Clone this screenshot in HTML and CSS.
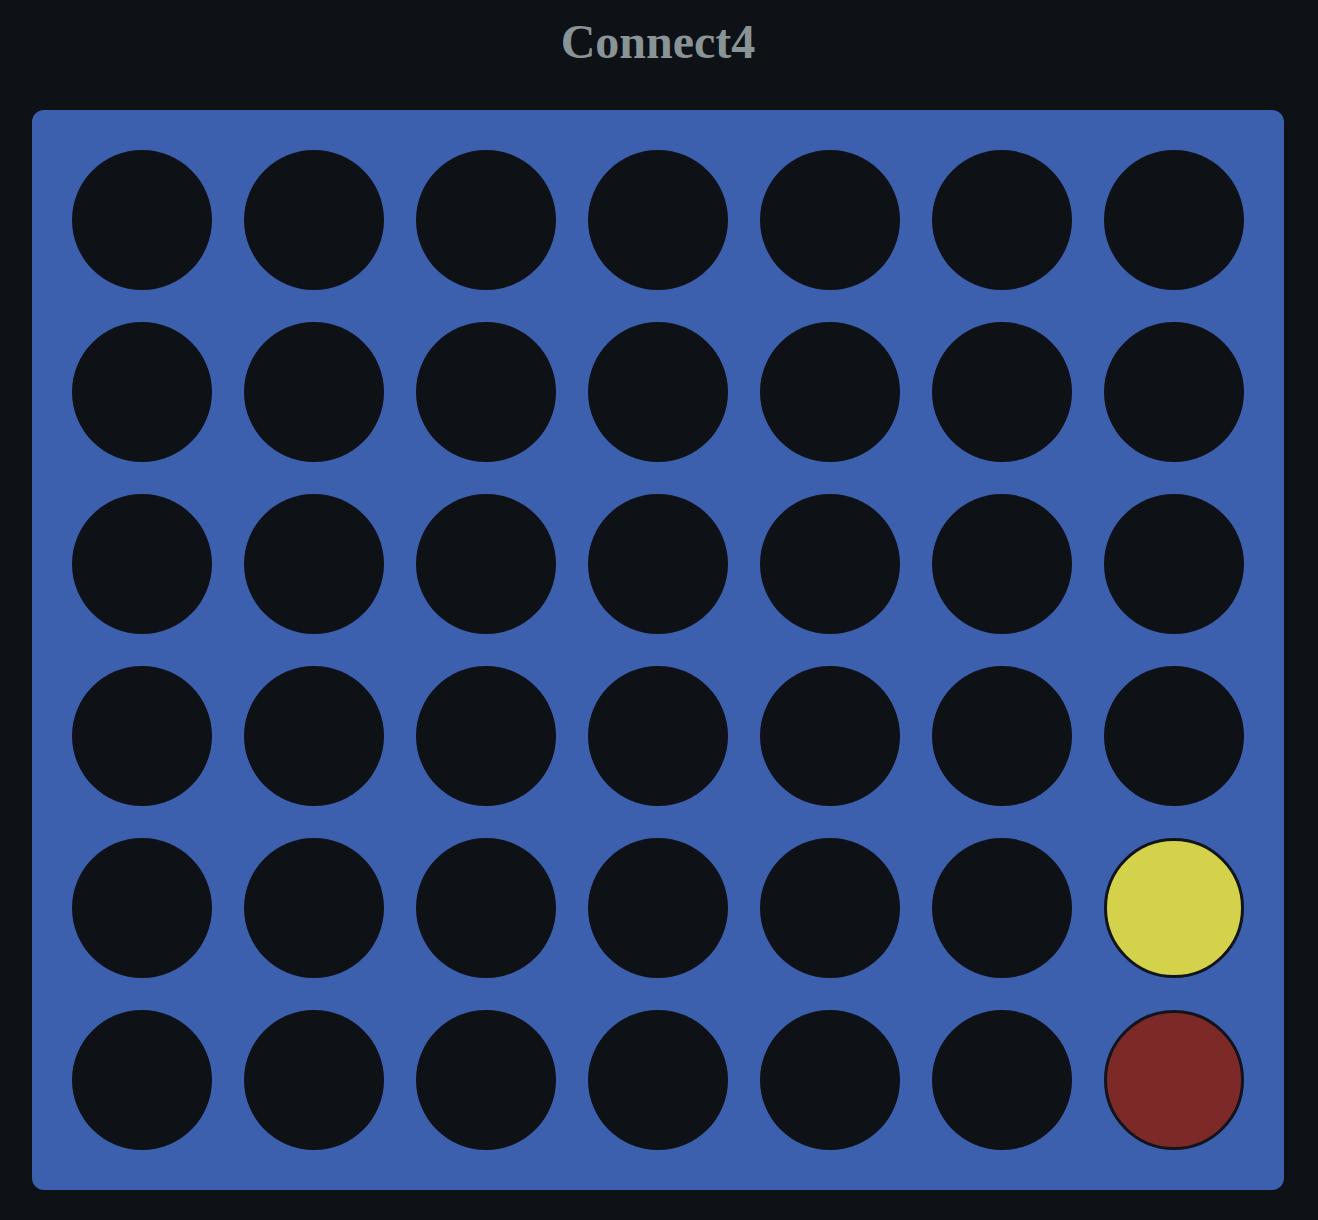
FILE: index.html
```html
<!DOCTYPE html>
<html>
<head>
<meta charset="utf-8">
<title>Connect4</title>
<link rel="stylesheet" href="styles.css">
</head>
<body>
<main class="app">
  <h1 class="title">Connect4</h1>
  <div class="board">
    <div class="cell"></div><div class="cell"></div><div class="cell"></div><div class="cell"></div><div class="cell"></div><div class="cell"></div><div class="cell"></div>
    <div class="cell"></div><div class="cell"></div><div class="cell"></div><div class="cell"></div><div class="cell"></div><div class="cell"></div><div class="cell"></div>
    <div class="cell"></div><div class="cell"></div><div class="cell"></div><div class="cell"></div><div class="cell"></div><div class="cell"></div><div class="cell"></div>
    <div class="cell"></div><div class="cell"></div><div class="cell"></div><div class="cell"></div><div class="cell"></div><div class="cell"></div><div class="cell"></div>
    <div class="cell"></div><div class="cell"></div><div class="cell"></div><div class="cell"></div><div class="cell"></div><div class="cell"></div><div class="cell yellow"></div>
    <div class="cell"></div><div class="cell"></div><div class="cell"></div><div class="cell"></div><div class="cell"></div><div class="cell"></div><div class="cell red"></div>
  </div>
</main>
</body>
</html>
```
FILE: styles.css
```css
html, body {
  margin: 0;
  padding: 0;
  background: #0e1116;
}
.app {
  display: flex;
  flex-direction: column;
  align-items: center;
  padding: 18px 34px 30px 32px;
}
.title {
  margin: 0 0 44px;
  font-family: "Liberation Serif", "Times New Roman", serif;
  font-weight: bold;
  font-size: 48px;
  line-height: 48px;
  color: #889495;
  letter-spacing: 0;
}
.board {
  box-sizing: border-box;
  width: 1252px;
  padding: 40px;
  background: #3c5fae;
  border-radius: 12px;
  display: grid;
  grid-template-columns: repeat(7, 140px);
  grid-auto-rows: 140px;
  gap: 32px;
}
.cell {
  width: 140px;
  height: 140px;
  border-radius: 50%;
  background: #0e1116;
  box-sizing: border-box;
}
.cell.yellow {
  background: #d4d14b;
  border: 3px solid #11141b;
}
.cell.red {
  background: #7c2927;
  border: 3px solid #11141b;
}
```
